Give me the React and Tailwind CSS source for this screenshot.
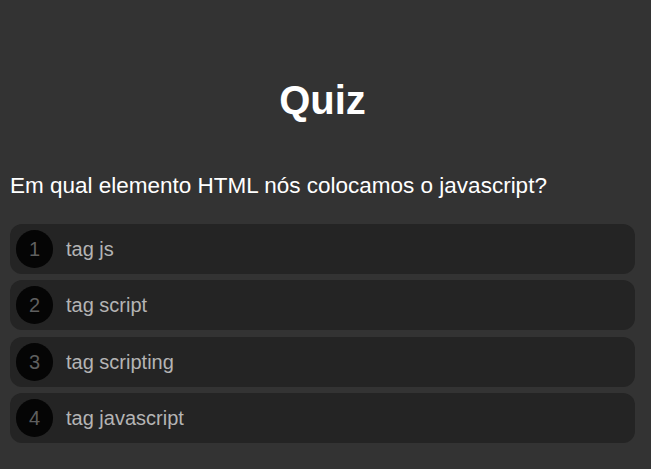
const opcoes = ['tag js', 'tag script', 'tag scripting', 'tag javascript'];

export default function App() {
  return (
    <div className="min-h-screen bg-[#333333] font-['Liberation_Sans',Arial,sans-serif]">
      <div className="ml-[10px] w-[625px] pt-[77px]">
        <h1 className="text-center text-[40px] font-bold leading-[46px] text-white">Quiz</h1>

        <p className="mt-[50px] text-[22.5px] leading-[26px] text-white">
          Em qual elemento HTML nós colocamos o javascript?
        </p>

        <div className="mt-[25px] flex flex-col gap-[6.4px]">
          {opcoes.map((opcao, i) => (
            <div key={opcao} className="flex h-[50px] items-center rounded-[12px] bg-[#242424] px-[6px]">
              <span className="flex h-[38px] w-[37px] items-center justify-center rounded-full bg-[#050505] text-[20px] text-[#5f5f5f]">
                {i + 1}
              </span>
              <span className="ml-[13px] text-[20px] text-[#b4b4b4]">{opcao}</span>
            </div>
          ))}
        </div>
      </div>
    </div>
  );
}
